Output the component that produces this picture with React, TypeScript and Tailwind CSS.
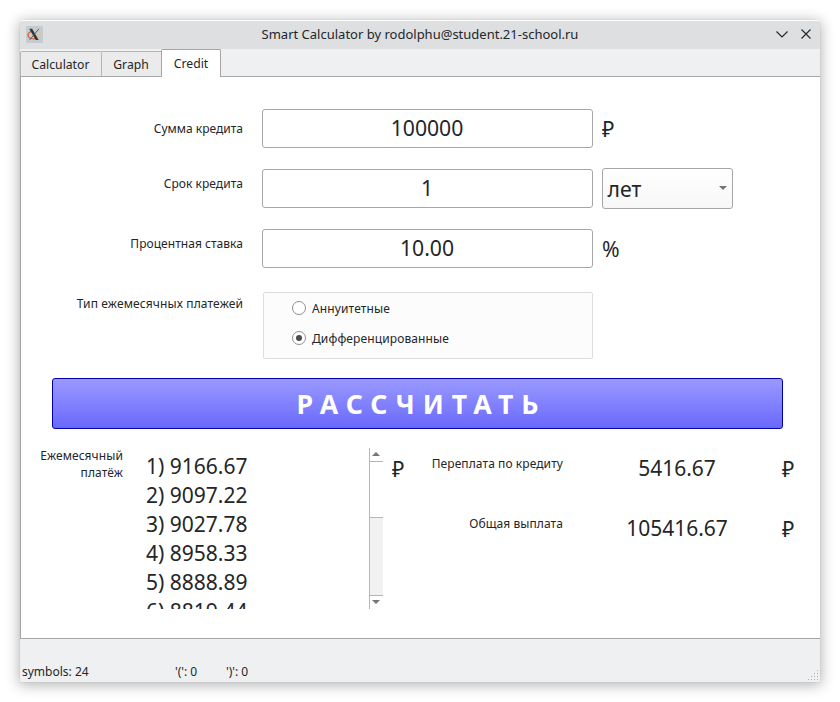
import React from "react";

const payments = [
  "1) 9166.67",
  "2) 9097.22",
  "3) 9027.78",
  "4) 8958.33",
  "5) 8888.89",
  "6) 8819.44",
];

function XLogo() {
  return (
    <svg width="17" height="17" viewBox="0 0 17 17" className="-mt-[2px] ml-[6px] block">
      <rect width="17" height="17" rx="1" fill="#c3cdd1" />
      <path d="M5 5.500C1 7 1 11 5 12.500c2 .7 4 .3 5.500-.5" fill="none" stroke="#e8622c" strokeWidth="1.300" />
      <path d="M9.500 5.200c4-.8 6.500 2 4.500 5-1 1.500-2.500 2-4 2.200" fill="none" stroke="#dcc59c" strokeWidth="1.200" />
      <path d="M3.200 2.800h2.900l6.600 11.200H9.700z" fill="#2f3436" />
      <path d="M12.900 2.800 3.600 14" stroke="#4c5254" strokeWidth="0.900" />
    </svg>
  );
}

function TitleBar() {
  return (
    <div className="flex h-[29px] items-center rounded-t-[3px] border-t border-white bg-[#dedfe1] text-[13px]">
      <XLogo />
      <div className="-mt-[2px] grow pl-[27px] text-center leading-[18px]">
        Smart Calculator by rodolphu@student.21-school.ru
      </div>
      <svg width="50" height="20" viewBox="0 0 50 20" fill="none" stroke="#232629" strokeWidth="1.100" className="-mt-[2px]">
        <path d="M6.500 7.500 12 13l5.500-5.500M31.500 5.500l9 9M40.500 5.500l-9 9" />
      </svg>
    </div>
  );
}

function Tabs() {
  return (
    <div className="flex h-[27px] items-end bg-[#eff0f1] text-[12.200px]">
      <div className="flex h-[25px] w-[82px] items-center justify-center rounded-t-[2px] border border-b-0 border-[#b4b5b6] bg-[#ebebeb] pr-[1px] pt-[2px]">Calculator</div>
      <div className="flex h-[25px] w-[59px] items-center justify-center border-t border-[#b4b5b6] bg-[#ebebeb] pr-[1px] pt-[2px]">Graph</div>
      <div className="z-10 -mb-px flex h-[28px] w-[60px] items-center justify-center rounded-t-[2px] border border-b-0 border-[#a5a6a7] bg-white pt-[2px]">Credit</div>
    </div>
  );
}

function FormRow({ label, value, low, children }: { label: string; value: string; low?: boolean; children: React.ReactNode }) {
  return (
    <div className="flex h-[60px] items-center">
      <div className={low ? "w-[222px] shrink-0 pt-[2px] text-right" : "w-[222px] shrink-0 pb-[8px] text-right tracking-[0.04px]"}>{label}</div>
      <div className="ml-[19px] flex h-[39px] w-[331px] shrink-0 items-center justify-center rounded-[3px] border border-[#a5a6a8] bg-white pr-[1px] text-[21.200px]">{value}</div>
      <div className="ml-[9px] text-[21.200px]">{children}</div>
    </div>
  );
}

function Radio({ label, checked }: { label: string; checked?: boolean }) {
  return (
    <div className="flex h-[30px] items-center gap-[6px]">
      <div className="flex h-[14px] w-[14px] items-center justify-center rounded-full border border-[#8e8f90] bg-white">
        {checked && <div className="h-[6px] w-[6px] rounded-full bg-[#4a4b4c]" />}
      </div>
      <span className="pt-[2px] tracking-[0.12px]">{label}</span>
    </div>
  );
}

function Arrow({ up }: { up?: boolean }) {
  return (
    <svg width="8" height="4" viewBox="0 0 8 4" className="block">
      <path d={up ? "M0 4h8L4 0z" : "M0 0h8L4 4z"} fill="#737577" />
    </svg>
  );
}

function ScrollBar() {
  return (
    <div className="flex h-[161px] w-[14px] flex-col border-l border-[#b4b5b6]">
      <div className="flex h-[14px] items-center justify-center border-b border-[#b4b5b6] pb-[1px] pr-[1px]"><Arrow up /></div>
      <div className="h-[55px]" />
      <div className="h-[79px] border-y border-[#b4b5b6] bg-[#f2f2f2]" />
      <div className="flex h-[13px] items-center justify-center pb-[1px] pr-[1px]"><Arrow /></div>
    </div>
  );
}

function Total({ label, value }: { label: string; value: string }) {
  return (
    <div className="flex h-[60px]">
      <div className="w-[149px] pt-[7px] text-right leading-[17px] tracking-[0.08px]">{label}</div>
      <div className="w-[228px] pt-[6px] text-center text-[21px] leading-[29px]">{value}</div>
      <div className="-ml-[9px] pt-[6px] text-[21.200px] leading-[29px]">₽</div>
    </div>
  );
}

export default function App() {
  return (
    <div className="h-[702px] w-[840px] bg-white p-[20px] font-['Noto_Sans',sans-serif] text-[12px] text-[#232629]">
      <div className="flex h-[662px] w-[800px] flex-col rounded-t-[4px] bg-[#eff0f1] shadow-[0_0_1px_0px_rgba(0,0,0,0.25),0_2px_14px_1px_rgba(0,0,0,0.3)]">
        <TitleBar />
        <Tabs />
        <main className="h-[563px] overflow-hidden border-y border-l border-[#a5a6a8] bg-white pt-[21px]">
          <FormRow label="Сумма кредита" value="100000" low><div className="pt-[2px]">₽</div></FormRow>
          <FormRow label="Срок кредита" value="1">
            <div className="flex h-[41px] w-[131px] items-center justify-between rounded-[3px] border border-[#a5a6a8] bg-linear-to-b from-white to-[#f7f7f7] pl-[4.500px] pr-[5px]">
              <span className="pt-[2px]">лет</span>
              <Arrow />
            </div>
          </FormRow>
          <FormRow label="Процентная ставка" value="10.00"><div className="pt-[2px]">%</div></FormRow>
          <div className="flex h-[100px]">
            <div className="w-[222px] pt-[17px] text-right leading-[17px] tracking-[0.14px]">Тип ежемесячных платежей</div>
            <div className="ml-[20px] mt-[14px] h-[67px] w-[330px] rounded-[2px] border border-[#dcdddd] bg-[#fcfcfc] pl-[28px]">
              <Radio label="Аннуитетные" />
              <Radio label="Дифференцированные" checked />
            </div>
          </div>
          <button className="ml-[31px] flex h-[51px] w-[731px] items-center justify-center rounded-[3px] border border-[#0000a8] bg-linear-to-b from-[#9b99ff] to-[#6a68fc] pl-[8px] pt-[2px] text-[26.660px] font-bold tracking-[8px] text-white">
            <span>РАССЧИТАТЬ</span>
          </button>
          <div className="mt-[19px] flex h-[161px]">
            <div className="-mt-px w-[102px] text-right leading-[17px] tracking-[0.1px]">Ежемесячный<br />платёж</div>
            <div className="ml-[23px] h-[161px] w-[223px] overflow-hidden pt-[4px] text-[21px] leading-[29px]">
              {payments.map((p) => <div key={p}>{p}</div>)}
            </div>
            <ScrollBar />
            <div className="ml-[9px] w-[22px] pt-[6px] text-[21.200px] leading-[29px]">₽</div>
            <div>
              <Total label="Переплата по кредиту" value="5416.67" />
              <Total label="Общая выплата" value="105416.67" />
            </div>
          </div>
        </main>
        <footer className="flex h-[43px] items-end justify-between pb-[2px] pl-[2px] pr-[2px]">
          <div className="flex leading-[17px]">
            <span className="w-[153px]">symbols: 24</span>
            <span className="w-[51px]">'(': 0</span>
            <span>')': 0</span>
          </div>
          <svg width="10" height="10" fill="#b0b1b2">
            {[[9, 0], [6, 3], [9, 3], [3, 6], [6, 6], [9, 6], [0, 9], [3, 9], [6, 9], [9, 9]].map(([x, y]) => (
              <rect key={`${x}-${y}`} x={x} y={y} width="1" height="1" />
            ))}
          </svg>
        </footer>
      </div>
    </div>
  );
}
